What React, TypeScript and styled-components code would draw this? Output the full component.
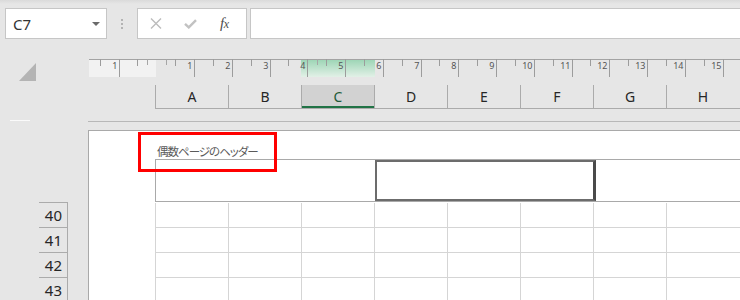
import React from 'react';
import styled, { createGlobalStyle } from 'styled-components';

const Global = createGlobalStyle`
  html, body { margin: 0; padding: 0; background: #e6e6e6; }
  #root { width: 740px; height: 300px; }
`;

const Screen = styled.div`
  width: 740px;
  height: 300px;
  overflow: hidden;
  display: flex;
  flex-direction: column;
  background: linear-gradient(#dadada 0px, #e6e6e6 4px);
  font-family: "Noto Sans", "Liberation Sans", sans-serif;
`;

/* ---------- formula bar ---------- */
const FormulaBar = styled.div`
  flex-shrink: 0;
  display: flex;
  height: 31px;
  margin-top: 8px;
  padding-left: 5px;
`;

const Field = styled.div`
  box-sizing: border-box;
  height: 100%;
  background: #fff;
  border: 1px solid #c6c6c6;
  display: flex;
  align-items: center;
`;

const NameBox = styled(Field)`
  width: 102px;
  padding: 0 6px 0 7px;
  font-size: 15px;
  color: #333;
`;

const DropArrow = styled.span`
  margin-left: auto;
  width: 0;
  height: 0;
  border-left: 4px solid transparent;
  border-right: 4px solid transparent;
  border-top: 4px solid #6a6a6a;
`;

const Grip = styled.div`
  width: 30px;
  display: flex;
  flex-direction: column;
  align-items: center;
  justify-content: center;
  gap: 2px;
`;

const GripDot = styled.span`
  width: 2px;
  height: 2px;
  background: #b3b3b3;
`;

const FuncBox = styled(Field)`
  width: 110px;
  padding-left: 12px;
`;

const FxLabel = styled.span`
  margin-left: 23px;
  font-family: "Liberation Serif", "DejaVu Serif", serif;
  font-style: italic;
  font-size: 15px;
  color: #4e4e4e;
  letter-spacing: -0.5px;
  & > small { font-size: 12px; }
`;

const FormulaInput = styled(Field)`
  flex: 1;
  margin-left: 3px;
  border-right: none;
`;

/* ---------- headers area ---------- */
const HeaderArea = styled.div`
  flex-shrink: 0;
  display: grid;
  grid-template-columns: 89px 1fr;
  height: 62px;
  margin-top: 20px;
`;

const Corner = styled.div`
  display: flex;
  flex-direction: column;
  padding: 4px 0 0 19px;
`;

const SelectAll = styled.div`
  width: 17px;
  height: 18px;
  background: #b4b4b4;
  clip-path: polygon(100% 0, 100% 100%, 0 100%);
`;

const CornerDash = styled.div`
  margin-top: auto;
  margin-left: -9px;
  width: 20px;
  height: 1px;
  background: #fafafa;
`;

const RightHead = styled.div`
  display: flex;
  flex-direction: column;
`;

const RulerSvg = styled.svg`
  display: block;
  width: 651px;
  height: 19px;
`;

const ColumnHeaders = styled.div`
  display: flex;
  height: 24px;
  margin-top: 7px;
  margin-left: 66px;
  box-sizing: border-box;
  border-bottom: 1px solid #ababab;
`;

const ColHeader = styled.div<{ $selected?: boolean }>`
  flex: 0 0 73px;
  box-sizing: border-box;
  border-left: 1px solid #ababab;
  display: flex;
  align-items: center;
  justify-content: center;
  font-size: 14px;
  color: ${(p) => (p.$selected ? '#1d5a37' : '#262626')};
  background: ${(p) => (p.$selected ? '#d2d2d2' : 'transparent')};
  box-shadow: ${(p) => (p.$selected ? 'inset 0 -2px 0 #217346' : 'none')};
`;

const Divider = styled.div`
  flex-shrink: 0;
  height: 1px;
  margin-left: 88px;
  background: #b8b8b8;
`;

/* ---------- page area ---------- */
const PageArea = styled.div`
  flex: 1;
  display: grid;
  grid-template-columns: 88px 1fr;
  margin-top: 8px;
  min-height: 0;
`;

const RowHeaders = styled.div`
  padding-top: 72px;
  margin-left: 39px;
  width: 29px;
`;

const RowHeader = styled.div`
  height: 25px;
  box-sizing: border-box;
  border-top: 1px solid #ababab;
  border-right: 1px solid #ababab;
  display: flex;
  align-items: center;
  justify-content: flex-end;
  padding-right: 5px;
  font-size: 15px;
  color: #262626;
`;

const Page = styled.div`
  position: relative;
  background: #fff;
  border-top: 1px solid #a9a9a9;
  border-left: 1px solid #a9a9a9;
  padding-left: 66px;
  overflow: hidden;
`;

const HeaderCaption = styled.div`
  height: 28px;
  box-sizing: border-box;
  padding: 13px 0 0 2px;
  font-family: "Noto Sans CJK JP", "Noto Sans", sans-serif;
  font-feature-settings: "palt";
  font-size: 11.5px;
  letter-spacing: -1px;
  line-height: 15px;
  color: #5a5a5a;
  white-space: nowrap;
`;

const HeaderBox = styled.div`
  display: flex;
  height: 43px;
  box-sizing: border-box;
  border: 1px solid #a9a9a9;
  border-right: none;
`;

const HeaderSection = styled.div<{ $width?: number; $active?: boolean }>`
  flex: ${(p) => (p.$width ? `0 0 ${p.$width}px` : '1')};
  box-sizing: border-box;
  ${(p) =>
    p.$active &&
    `border: 2px solid #6c6c6c;
     border-right: 3px solid #4a4a4a;`}
`;

const Grid = styled.div`
  padding-top: 1px;
`;

const GridRow = styled.div`
  display: flex;
  height: 25px;
  box-sizing: border-box;
  border-bottom: 1px solid #d5d5d5;
`;

const GridCell = styled.div<{ $last?: boolean }>`
  flex: ${(p) => (p.$last ? '1' : '0 0 73px')};
  box-sizing: border-box;
  border-left: 1px solid #d5d5d5;
`;

const Callout = styled.div`
  position: absolute;
  left: 49px;
  top: 1px;
  width: 139px;
  height: 40px;
  box-sizing: border-box;
  border: 3px solid #ff0000;
  pointer-events: none;
`;

/* ---------- ruler drawing ---------- */
const O = 67.3;
const U = 37.75;
const RW = 651;

function Ruler() {
  const items: React.ReactNode[] = [];
  for (let n = -1; n <= 16; n++) {
    if (n === 0) continue;
    const x = Math.round(O + n * U) + 0.5;
    if (x < 0 || x > RW) continue;
    items.push(<line key={`L${n}`} x1={x} y1={0} x2={x} y2={18} stroke="#9c9c9c" strokeWidth={1} />);
    items.push(
      <text key={`T${n}`} x={x - 2} y={10} textAnchor="end" fontSize={9} fill="#555" fontFamily='"Noto Sans", "Liberation Sans", sans-serif'>
        {Math.abs(n)}
      </text>
    );
  }
  for (let n = -2; n <= 16; n++) {
    const x = Math.round(O + (n + 0.5) * U) + 0.5;
    if (x < 0 || x > RW) continue;
    items.push(<line key={`H${n}`} x1={x} y1={0} x2={x} y2={7} stroke="#9c9c9c" strokeWidth={1} />);
  }
  [-0.25, 0.25, 4.25].forEach((q) => {
    const x = Math.round(O + q * U) + 0.5;
    items.push(<line key={`Q${q}`} x1={x} y1={0} x2={x} y2={6} stroke="#a6a6a6" strokeWidth={1} />);
  });
  return (
    <RulerSvg viewBox={`0 0 ${RW} 19`}>
      <defs>
        <linearGradient id="selGreen" x1="0" y1="0" x2="0" y2="1">
          <stop offset="0" stopColor="#9ed6b6" />
          <stop offset="1" stopColor="#e2f0e7" />
        </linearGradient>
      </defs>
      <rect x={0} y={1} width={67} height={17} fill="#f2f2f2" />
      <rect x={212} y={1} width={74} height={17} fill="url(#selGreen)" />
      <line x1={0} y1={0.5} x2={RW} y2={0.5} stroke="#a3a3a3" strokeWidth={1} />
      {items}
    </RulerSvg>
  );
}

const CancelIcon = () => (
  <svg width="12" height="11" viewBox="0 0 12 11">
    <path d="M1 0.5 L11 10.5 M11 0.5 L1 10.5" stroke="#bcbcbc" strokeWidth="1.4" fill="none" />
  </svg>
);

const CheckIcon = () => (
  <svg width="13" height="10" viewBox="0 0 13 10" style={{ marginLeft: 22 }}>
    <path d="M1 4.8 L4.8 8.4 L12 1.2" stroke="#c2c2c2" strokeWidth="2.4" fill="none" />
  </svg>
);

const columns = ['A', 'B', 'C', 'D', 'E', 'F', 'G', 'H'];
const rows = [40, 41, 42, 43];

export default function App() {
  return (
    <Screen>
      <Global />
      <FormulaBar>
        <NameBox>
          C7
          <DropArrow />
        </NameBox>
        <Grip>
          <GripDot />
          <GripDot />
          <GripDot />
        </Grip>
        <FuncBox>
          <CancelIcon />
          <CheckIcon />
          <FxLabel>
            f<small>x</small>
          </FxLabel>
        </FuncBox>
        <FormulaInput />
      </FormulaBar>

      <HeaderArea>
        <Corner>
          <SelectAll />
          <CornerDash />
        </Corner>
        <RightHead>
          <Ruler />
          <ColumnHeaders>
            {columns.map((c) => (
              <ColHeader key={c} $selected={c === 'C'}>
                {c}
              </ColHeader>
            ))}
          </ColumnHeaders>
        </RightHead>
      </HeaderArea>

      <Divider />

      <PageArea>
        <RowHeaders>
          {rows.map((r) => (
            <RowHeader key={r}>{r}</RowHeader>
          ))}
        </RowHeaders>
        <Page>
          <HeaderCaption>偶数ページのヘッダー</HeaderCaption>
          <HeaderBox>
            <HeaderSection $width={219} />
            <HeaderSection $width={221} $active />
            <HeaderSection />
          </HeaderBox>
          <Grid>
            {rows.map((r) => (
              <GridRow key={r}>
                {columns.map((c, i) => (
                  <GridCell key={c} $last={i === columns.length - 1} />
                ))}
              </GridRow>
            ))}
          </Grid>
          <Callout />
        </Page>
      </PageArea>
    </Screen>
  );
}
